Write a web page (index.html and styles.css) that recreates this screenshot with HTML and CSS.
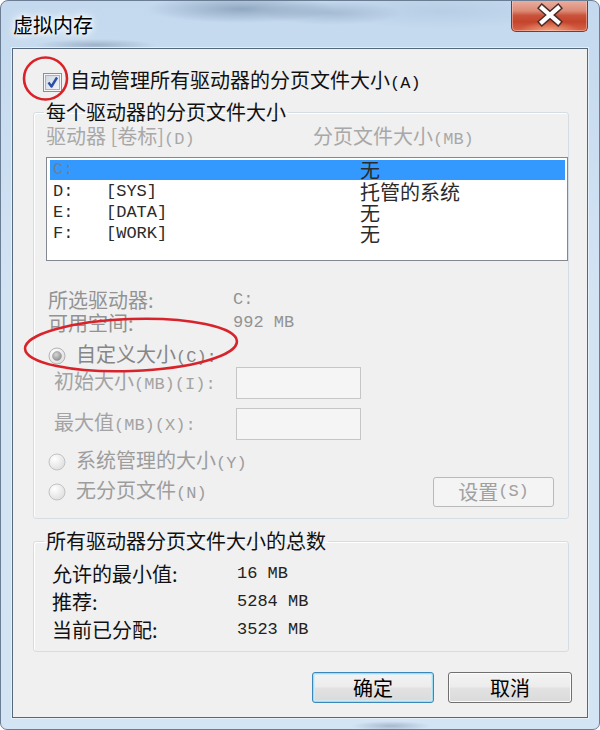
FILE: index.html
```html
<!DOCTYPE html>
<html lang="zh-CN">
<head>
<meta charset="utf-8">
<title>虚拟内存</title>
<link rel="stylesheet" href="styles.css">
</head>
<body>
<div class="window">
  <div class="titlebar">
    <span class="title">虚拟内存</span>
    <button class="close" type="button" aria-label="关闭">
      <svg width="77" height="32" viewBox="0 0 77 32">
        <path d="M31 9 L47 23 M47 9 L31 23" stroke="#4b2b26" stroke-width="7" stroke-linecap="square" fill="none"/>
        <path d="M31 9 L47 23 M47 9 L31 23" stroke="#ffffff" stroke-width="4.2" stroke-linecap="square" fill="none"/>
      </svg>
    </button>
  </div>

  <div class="client">
    <label class="auto">
      <span class="checkbox">
        <svg width="19" height="19" viewBox="0 0 19 19">
          <defs>
            <linearGradient id="cbfill" x1="0" y1="0" x2="1" y2="1">
              <stop offset="0" stop-color="#cfd7e2"/>
              <stop offset="1" stop-color="#f4f6f9"/>
            </linearGradient>
          </defs>
          <rect x="0.5" y="0.5" width="18" height="18" fill="#f6f6f6" stroke="#8e8f8f"/>
          <rect x="2.5" y="2.5" width="14" height="14" fill="url(#cbfill)" stroke="#a9b2c0"/>
          <path d="M5.5 9.5 L8.5 13.5 L14 4.5" stroke="#2a4fa8" stroke-width="2.4" fill="none" stroke-linejoin="round"/>
        </svg>
      </span>
      <span>自动管理所有驱动器的分页文件大小<span class="lat">(A)</span></span>
    </label>

    <fieldset class="group">
      <legend>每个驱动器的分页文件大小</legend>
      <div class="group-body drives">
        <div class="cols disabled">
          <span class="col-drive">驱动器 [卷标]<span class="lat">(D)</span></span>
          <span>分页文件大小<span class="lat">(MB)</span></span>
        </div>
        <ul class="listbox">
          <li class="row selected"><span class="drv lat">C:</span><span class="vol lat"></span><span class="size">无</span></li>
          <li class="row"><span class="drv lat">D:</span><span class="vol lat">[SYS]</span><span class="size">托管的系统</span></li>
          <li class="row"><span class="drv lat">E:</span><span class="vol lat">[DATA]</span><span class="size">无</span></li>
          <li class="row"><span class="drv lat">F:</span><span class="vol lat">[WORK]</span><span class="size">无</span></li>
        </ul>

        <dl class="info disabled">
          <div class="info-row"><dt>所选驱动器:</dt><dd class="lat">C:</dd></div>
          <div class="info-row"><dt>可用空间:</dt><dd class="lat">992 MB</dd></div>
        </dl>

        <div class="radio-row custom disabled">
          <span class="radio checked">
            <svg width="18" height="18" viewBox="0 0 18 18">
              <defs>
                <radialGradient id="rfill" cx="0.35" cy="0.3" r="0.8">
                  <stop offset="0" stop-color="#ffffff"/>
                  <stop offset="1" stop-color="#dcdcdc"/>
                </radialGradient>
                <radialGradient id="rdot" cx="0.4" cy="0.35" r="0.7">
                  <stop offset="0" stop-color="#d6d6d6"/>
                  <stop offset="1" stop-color="#8c8c8c"/>
                </radialGradient>
              </defs>
              <circle cx="9" cy="9" r="8" fill="url(#rfill)" stroke="#b4b4b4"/>
              <circle cx="9" cy="9" r="4.5" fill="url(#rdot)" stroke="#9a9a9a" stroke-width="0.6"/>
            </svg>
          </span>
          <span class="custom-text">自定义大小<span class="lat">(C):</span></span>
        </div>

        <div class="size-row disabled">
          <span class="size-label">初始大小<span class="lat">(MB)(I):</span></span>
          <span class="textbox"></span>
        </div>
        <div class="size-row second disabled">
          <span class="size-label">最大值<span class="lat">(MB)(X):</span></span>
          <span class="textbox"></span>
        </div>

        <div class="radio-row sys disabled">
          <span class="radio">
            <svg width="18" height="18" viewBox="0 0 18 18">
              <circle cx="9" cy="9" r="8" fill="url(#rfill)" stroke="#c2c2c2"/>
            </svg>
          </span>
          <span>系统管理的大小<span class="lat">(Y)</span></span>
        </div>

        <div class="none-row">
          <div class="radio-row disabled">
            <span class="radio">
              <svg width="18" height="18" viewBox="0 0 18 18">
                <circle cx="9" cy="9" r="8" fill="url(#rfill)" stroke="#c2c2c2"/>
              </svg>
            </span>
            <span>无分页文件<span class="lat">(N)</span></span>
          </div>
          <button class="btn btn-set" type="button" disabled>设置<span class="lat">(S)</span></button>
        </div>
      </div>
    </fieldset>

    <fieldset class="group totals">
      <legend>所有驱动器分页文件大小的总数</legend>
      <dl class="group-body total-list">
        <div class="total-row"><dt>允许的最小值:</dt><dd class="lat">16 MB</dd></div>
        <div class="total-row"><dt>推荐:</dt><dd class="lat">5284 MB</dd></div>
        <div class="total-row"><dt>当前已分配:</dt><dd class="lat">3523 MB</dd></div>
      </dl>
    </fieldset>

    <div class="actions">
      <button class="btn btn-ok" type="button">确定</button>
      <button class="btn btn-cancel" type="button">取消</button>
    </div>
  </div>

  <svg class="annot" width="600" height="730" viewBox="0 0 600 730" aria-hidden="true">
    <ellipse cx="45.5" cy="78.5" rx="21.5" ry="21" fill="none" stroke="#d8232a" stroke-width="2.6"/>
    <ellipse cx="131" cy="345" rx="106" ry="26" transform="rotate(-2 131 345)" fill="none" stroke="#d8232a" stroke-width="2.6"/>
  </svg>
</div>
</body>
</html>
```

FILE: styles.css
```css
* {
  box-sizing: border-box;
}

html,
body {
  margin: 0;
  padding: 0;
}

body {
  width: 600px;
  height: 730px;
  overflow: hidden;
  background: #ffffff;
  font-family: "Noto Sans CJK SC", "Noto Sans", sans-serif;
  font-size: 20px;
  color: #1b1b1b;
}

.lat {
  font-family: "Liberation Mono", "DejaVu Sans Mono", monospace;
  font-size: 17px;
}

.window {
  position: relative;
  width: 600px;
  height: 730px;
  border: 1px solid #6a7d92;
  border-radius: 8px 8px 7px 7px;
  overflow: hidden;
  background:
    radial-gradient(ellipse 95px 14px at 240px 8px, rgba(95, 120, 150, 0.5), rgba(95, 120, 150, 0) 100%),
    radial-gradient(ellipse 70px 12px at 330px 12px, rgba(110, 135, 165, 0.35), rgba(110, 135, 165, 0) 100%),
    radial-gradient(ellipse 60px 6px at 95px 44px, rgba(110, 130, 155, 0.45), rgba(110, 130, 155, 0) 100%),
    radial-gradient(ellipse 120px 18px at 440px 10px, rgba(160, 185, 210, 0.35), rgba(160, 185, 210, 0) 100%),
    radial-gradient(ellipse 40px 5px at 390px 725px, rgba(100, 120, 145, 0.4), rgba(100, 120, 145, 0) 100%),
    linear-gradient(180deg, #c4d9ee 0%, #d2e3f4 40%, #d3e4f5 100%);
}

.titlebar {
  height: 47px;
  display: flex;
  justify-content: space-between;
  align-items: flex-start;
  padding-left: 12px;
}

.title {
  align-self: center;
  line-height: 24px;
  color: #000000;
  text-shadow: 0 0 5px #ffffff, 0 0 9px #ffffff, 0 0 12px rgba(255, 255, 255, 0.9);
}

.close {
  width: 77px;
  height: 32px;
  margin: -1px 11px 0 0;
  padding: 0;
  border: 1px solid #7a3a2e;
  border-top: none;
  border-radius: 0 0 5px 5px;
  background:
    radial-gradient(ellipse 30px 10px at 50% 100%, rgba(255, 190, 150, 0.7), rgba(255, 190, 150, 0) 100%),
    linear-gradient(180deg, #eab1a4 0%, #dc8a76 35%, #c9533b 50%, #c4442c 70%, #d7654a 100%);
  box-shadow: inset 0 0 0 1px rgba(255, 220, 210, 0.45);
  display: block;
}

.close svg {
  display: block;
  margin: -1px 0 0 -1px;
}

.client {
  margin-left: 11px;
  width: 576px;
  height: 670px;
  border: 1px solid #56687c;
  box-shadow: 0 0 0 1px rgba(235, 243, 250, 0.8);
  background: #f0f0f0;
  padding: 23px 18px 0 20px;
  display: flex;
  flex-direction: column;
}

.auto {
  display: flex;
  align-items: center;
  gap: 8px;
  height: 20px;
  margin-left: 10px;
  line-height: 20px;
  color: #111111;
}

.checkbox {
  display: block;
  width: 19px;
  height: 19px;
}

.checkbox svg {
  display: block;
}

.group {
  margin: 10px 0 0 0;
  padding: 0;
  min-width: 0;
  width: 536px;
  border: 1px solid #d5dde4;
  border-radius: 3px;
  box-shadow: inset 1px 1px 0 #ffffff;
}

.group legend {
  margin-left: 10px;
  padding: 0 2px;
  line-height: 20px;
  color: #111111;
}

.group-body {
  margin: 0;
}

.drives {
  padding: 4px 0 11px 12px;
}

.disabled {
  color: #9d9d9d;
}

.cols {
  display: flex;
  line-height: 20px;
  color: #a8a8a8;
}

.col-drive {
  width: 267px;
}

.listbox {
  list-style: none;
  margin: 7px 0 0 0;
  padding: 2px 2px 0 3px;
  width: 522px;
  height: 104px;
  border: 1px solid #838891;
  background: #ffffff;
}

.row {
  display: flex;
  height: 21px;
  line-height: 21px;
  color: #2b2b2b;
}

.row.selected {
  background: #3399ff;
  height: 20px;
  margin-bottom: 1px;
  line-height: 20px;
}

.row.selected .drv {
  color: #6f7f92;
}

.row.selected .size {
  color: #2a2a2a;
}

.drv {
  width: 56px;
  padding-left: 3px;
}

.vol {
  width: 254px;
}

.info {
  margin: 27px 0 0 0;
  padding-left: 2px;
  color: #939393;
}

.info-row {
  display: flex;
  line-height: 23px;
}

.info dt {
  width: 185px;
}

.info dd {
  margin: 0;
}

.radio-row {
  display: flex;
  align-items: center;
  gap: 10px;
  padding-left: 2px;
  line-height: 20px;
}

.radio {
  display: block;
  width: 18px;
  height: 18px;
}

.radio svg {
  display: block;
}

.custom {
  margin-top: 11px;
  height: 22px;
}

.custom-text {
  color: #868686;
}

.size-row {
  display: flex;
  align-items: center;
  height: 32px;
  padding-left: 8px;
  color: #a3a3a3;
}

.size-row.second {
  margin-top: 9px;
}

.size-label {
  width: 182px;
  line-height: 20px;
}

.textbox {
  display: block;
  width: 125px;
  height: 32px;
  border: 1px solid #c6c6c6;
  background: #f5f5f5;
}

.sys {
  margin-top: 12px;
  height: 20px;
}

.none-row {
  display: flex;
  justify-content: space-between;
  align-items: center;
  height: 30px;
  margin-top: 5px;
  padding-right: 14px;
}

.btn {
  font-family: "Noto Sans CJK SC", "Noto Sans", sans-serif;
  font-size: 20px;
  line-height: 20px;
  padding: 0;
  border-radius: 3px;
  display: flex;
  align-items: center;
  justify-content: center;
}

.btn-set {
  width: 121px;
  height: 30px;
  border: 1px solid #b9b9b9;
  background: #f4f4f4;
  color: #a0a0a0;
}

.totals {
  margin-top: 12px;
}

.total-list {
  padding: 9px 0 7px 18px;
}

.total-row {
  display: flex;
  line-height: 28px;
  color: #111111;
}

.total-row dt {
  width: 185px;
}

.total-row dd {
  margin: 0;
  color: #222222;
}

.actions {
  display: flex;
  justify-content: flex-end;
  gap: 14px;
  margin: 20px -3px 0 0;
}

.btn-ok,
.btn-cancel {
  height: 31px;
  color: #000000;
  background: linear-gradient(180deg, #f3f3f3 0%, #ececec 48%, #e2e2e2 52%, #dadada 100%);
}

.btn-ok {
  width: 122px;
  border: 1px solid #3d86b8;
  box-shadow: inset 0 0 0 1px #9fdcf6, inset 0 0 0 2px rgba(200, 236, 250, 0.8);
}

.btn-cancel {
  width: 124px;
  border: 1px solid #707070;
  box-shadow: inset 0 0 0 1px #fbfbfb;
}

.annot {
  position: absolute;
  left: -1px;
  top: -1px;
  pointer-events: none;
}
```
